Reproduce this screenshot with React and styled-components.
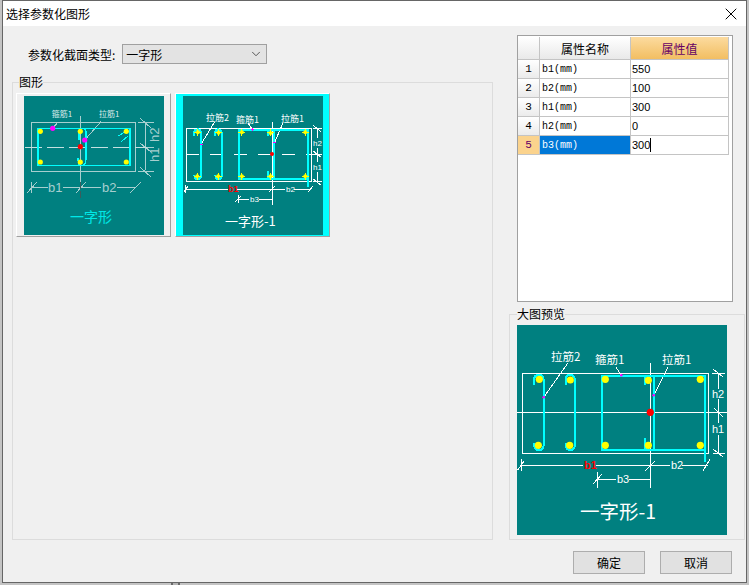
import React from "react";
import styled, { createGlobalStyle } from "styled-components";
import { ChevronDown, X } from "lucide-react";

const CJK = `"Noto Sans CJK SC", "Liberation Sans", sans-serif`;
const MONO = `"Liberation Mono", "Noto Sans CJK SC", monospace`;
const SANS = `"Liberation Sans", sans-serif`;

const GlobalStyle = createGlobalStyle`
  html, body {
    margin: 0;
    padding: 0;
    background: #c4c4c4;
  }
  * {
    box-sizing: border-box;
  }
`;

const Page = styled.div`
  width: 749px;
  height: 585px;
  padding-left: 2px;
  overflow: hidden;
  background-image: linear-gradient(
    90deg,
    transparent 171px,
    #6a6a6a 171px,
    #6a6a6a 173px,
    #b4b4b4 173px,
    #b4b4b4 178px,
    #6a6a6a 178px,
    #6a6a6a 180px,
    transparent 180px
  );
`;

const Dialog = styled.div`
  width: 745px;
  height: 583px;
  border: 1px solid #666;
  background: #f0f0f0;
  display: flex;
  flex-direction: column;
  font-family: ${CJK};
  font-size: 12px;
  color: #000;
`;

const TitleBar = styled.div`
  height: 25px;
  flex: none;
  background: #fff;
  display: flex;
  align-items: center;
  justify-content: space-between;
  padding: 0 5px 0 3px;
  line-height: 25px;
`;

const Content = styled.div`
  flex: none;
  height: 514px;
  display: flex;
  gap: 16px;
  padding-left: 9px;
`;

const LeftColumn = styled.div`
  width: 481px;
  display: flex;
  flex-direction: column;
  padding-top: 18px;
`;

const RightColumn = styled.div`
  width: 236px;
  display: flex;
  flex-direction: column;
  padding-top: 9px;
`;

const TypeRow = styled.div`
  height: 20px;
  display: flex;
  align-items: center;
  gap: 7px;
  padding-left: 16px;
  margin-bottom: 10px;
`;

const SelectBox = styled.div`
  width: 145px;
  height: 20px;
  border: 1px solid #a0a0a0;
  background: #e3e3e3;
  display: flex;
  align-items: center;
  justify-content: space-between;
  padding: 0 3px;
`;

const Group = styled.fieldset`
  margin: 0;
  min-width: 0;
  flex: 1;
  border: 1px solid #dcdcdc;
  padding: ${(p) => p.$padding};
  display: flex;
  align-items: flex-start;
`;

const GroupTitle = styled.legend`
  padding: 0;
  margin-left: ${(p) => p.$offset}px;
  height: 16px;
  line-height: 16px;
  font-size: 12px;
  background: #f0f0f0;
`;

const Thumb = styled.div`
  width: 155px;
  height: 144px;
  flex: none;
  display: flex;
  align-items: center;
  justify-content: center;
  margin-right: 4px;
  border: 1px solid;
  border-color: #fff #a0a0a0 #a0a0a0 #fff;
  background: ${(p) => (p.$selected ? "#00ffff" : "#f0f0f0")};
`;

const Drawing = styled.svg`
  display: block;
  flex: none;
  background: #008080;
`;

const Wire = styled.path`
  fill: none;
  stroke: ${(p) => p.$color || "#fff"};
  stroke-width: ${(p) => p.$weight || 1}px;
  stroke-dasharray: ${(p) => p.$dash || "none"};
  shape-rendering: crispEdges;
`;

const Caption = styled.text`
  font-family: ${(p) => (p.$latin ? SANS : CJK)};
  font-size: ${(p) => p.$size}px;
  font-weight: ${(p) => (p.$bold ? 700 : 400)};
  fill: ${(p) => p.$color || "#fff"};
`;

const Grid = styled.div`
  width: 216px;
  height: 267px;
  flex: none;
  margin-left: 8px;
  margin-bottom: 4px;
  border: 1px solid #a0a0a0;
  background: #fff;
  padding: 1px 3px 0 0;
`;

const GridRow = styled.div`
  display: grid;
  grid-template-columns: 22px 91px 98px;
  height: ${(p) => (p.$head ? 23 : 19)}px;
`;

const Cell = styled.div`
  border-right: 1px solid #c4c4c4;
  border-bottom: 1px solid #c4c4c4;
  display: flex;
  align-items: center;
  white-space: nowrap;
  overflow: hidden;
`;

const HeadCell = styled(Cell)`
  justify-content: center;
  font-size: 12px;
  background: ${(p) =>
    p.$active
      ? "linear-gradient(#fcdb9f, #f2be62)"
      : "linear-gradient(#ffffff, #e9e9e9)"};
  color: ${(p) => (p.$active ? "#660066" : "#000")};
`;

const RowNumber = styled(Cell)`
  justify-content: center;
  font-family: ${MONO};
  font-size: 11px;
  background: ${(p) =>
    p.$active ? "#fbd38d" : "linear-gradient(#ffffff, #ebebeb)"};
  color: ${(p) => (p.$active ? "#660066" : "#000")};
`;

const NameCell = styled(Cell)`
  padding-left: 2px;
  font-family: ${MONO};
  font-size: 10px;
  background: ${(p) => (p.$active ? "#0078d7" : "#fff")};
  color: ${(p) => (p.$active ? "#fff" : "#000")};
`;

const ValueCell = styled(Cell)`
  padding-left: 1px;
  font-family: ${SANS};
  font-size: 11px;
`;

const Editing = styled.span`
  border-right: 1px solid #000;
  line-height: 14px;
`;

const Footer = styled.div`
  flex: 1;
  display: flex;
  justify-content: flex-end;
  align-items: flex-start;
  gap: 15px;
  padding: 11px 14px 0 0;
`;

const Button = styled.button`
  width: 72px;
  height: 23px;
  padding: 0;
  border: 1px solid #adadad;
  background: #e1e1e1;
  font-family: ${CJK};
  font-size: 12px;
  color: #000;
`;

const ROWS = [
  ["b1(mm)", "550"],
  ["b2(mm)", "100"],
  ["h1(mm)", "300"],
  ["h2(mm)", "0"],
  ["b3(mm)", "300"],
];

// rebar outline, drawn at preview size and scaled down for the thumbnail
const STIRRUP = "M84.7 125V50.7H188V136.7M84.7 50.7V125H188";
const TIES = [
  "M17 60V55Q17 50 22 50Q26.7 50 26.7 56V119Q26.7 125 22 125Q17 125 17 118",
  "M48.5 60V55Q48.5 50 53 50Q58 50 58 56V119Q58 125 53 125Q48.5 125 48.5 118",
  "M127.5 60V54Q127.5 50.7 131 50.7H136.7V125H131Q127.5 125 127.5 120V113",
];
const BAR_TOP = [
  [22.3, 54.3],
  [53.3, 55],
  [88.3, 54.3],
  [131.3, 55.3],
  [183.3, 54.3],
];
const BAR_BOTTOM = [
  [21.3, 120.3],
  [52.7, 120.3],
  [88.3, 120.3],
  [131.3, 120.3],
  [183.3, 120.3],
];
const BARS = [...BAR_TOP, ...BAR_BOTTOM];

const PREVIEW_LINES = `
  M5.3 48.3H191.3V128.3H5.3Z M0 87.3H210 M133.3 38V162.7
  M26.7 72.3L50.7 38.3 M104.3 50.3L98.7 41.7 M136.7 70.3L151.3 41.7
  M4 140H66 M79 140H153 M165 140H191.3
  M0.7 145L7 136 M4 134V146 M128 146L138 136 M186 146L193 134
  M80.3 154.3H99 M112 154.3H133.3 M76 159L85 149 M80.3 147V163
  M201.3 48.3V64 M201.3 74V98 M201.3 110V128.3
  M195 48.3H208 M196 128.3H208 M196 44L206 52 M197 83L206 92 M196 124L206 132
`;

const SELECTED_LINES = `
  M3.3 32.3H128.3V85.7H3.3Z M89 25.7V109
  M18 48.3L31.7 25.7 M69.3 33.3L65 27 M91.7 46.3L100 27
  M2 93H45 M54 93H102 M111 93H128.3
  M1 96L5 90 M2 89V97 M86 96L92 90 M125 96L130 90
  M55 103H66 M76 103H90 M52 106L58 100 M55 99V107
  M134 32V42 M134 52V66 M134 76V86
  M130 32.3H139 M130 58H139 M130 85.7H139 M130 29L138 36 M130 55L138 61 M130 83L138 89
`;

const PLAIN_LINES = `
  M7.7 26.7H111.7V75H7.7Z
  M34.3 25.7L28.7 32.3 M77 25.7L60.7 44
  M7.7 91.7H24 M39 91.7H77 M93 91.7H111.7
  M3 97L13 86 M7.7 86V97 M52 97L62 86 M106 97L117 86
  M121 25.7V74 M114 26.7H130 M114 51H130 M114 75H130
  M116 22L127 32 M116 47L127 56 M116 71L127 81
`;

const PlainThumbnail = () => (
  <Drawing width="140" height="139" viewBox="0 0 140 139">
    <Wire d={PLAIN_LINES} $color="#a7cfcf" />
    <Wire d="M1 51.3H123" $color="#c4e0e0" $dash="17 5" />
    <Wire d="M56.7 20V86" $color="#a7cfcf" />
    <Wire d="M56.7 86V102" $color="#3c5c5c" $dash="7 2" />
    <Wire d="M14 32.3H106V69.7H14Z" $color="#00ffff" $weight={1.5} />
    <Wire
      d="M55 44V36Q55 32.3 59 32.3Q62 32.3 62 36V63Q62 69.7 57 69.7Q54 69.7 54 62"
      $color="#00ffff"
      $weight={1.3}
    />
    <Wire d="M94 40L103 35 M97 46L104 40" $color="#00ffff" />
    {[16.3, 56.3, 102.3].map((x) => (
      <React.Fragment key={x}>
        <circle cx={x} cy="35.3" r="2.6" fill="#ffff00" />
        <circle cx={x} cy="66" r="2.6" fill="#ffff00" />
      </React.Fragment>
    ))}
    <circle cx="28.7" cy="32.3" r="2.6" fill="#ff00ff" />
    <circle cx="60.7" cy="44" r="2.6" fill="#ff00ff" />
    <circle cx="56.3" cy="50.7" r="2.6" fill="#ff0000" />
    <Caption x="27.7" y="20.5" $size={8} $color="#d8eaea">
      箍筋1
    </Caption>
    <Caption x="75" y="20.5" $size={8} $color="#d8eaea">
      拉筋1
    </Caption>
    <Caption x="24" y="96" $size={13} $latin $color="#a7cfcf">
      b1
    </Caption>
    <Caption x="78" y="96" $size={13} $latin $color="#a7cfcf">
      b2
    </Caption>
    <Caption
      $size={13}
      $latin
      $color="#a7cfcf"
      transform="translate(135 46) rotate(-90)"
    >
      h2
    </Caption>
    <Caption
      $size={13}
      $latin
      $color="#a7cfcf"
      transform="translate(135 66) rotate(-90)"
    >
      h1
    </Caption>
    <Caption x="46" y="126" $size={14} $color="#00e8e8">
      一字形
    </Caption>
  </Drawing>
);

const SelectedThumbnail = () => (
  <Drawing width="140" height="139" viewBox="0 0 140 139">
    <Wire d={SELECTED_LINES} />
    <Wire d="M3 58H140" $dash="13 11" />
    <g transform="scale(0.667)">
      <Wire d={STIRRUP} $color="#00ffff" $weight={3} />
      {TIES.map((d) => (
        <Wire key={d} d={d} $color="#00ffff" $weight={3} />
      ))}
    </g>
    {BARS.map(([x, y]) => (
      <React.Fragment key={`${x}-${y}`}>
        <circle cx={x * 0.667} cy={y * 0.667} r="2" fill="#ffff00" />
        <Wire
          d={`M${x * 0.667 - 3.5} ${y * 0.667}h7M${x * 0.667} ${y * 0.667 - 3.5}v7`}
          $color="#ffff00"
        />
      </React.Fragment>
    ))}
    <circle cx="89" cy="58" r="2" fill="#ff0000" />
    <Wire
      d="M16.5 48.3h3M69.3 32v3M68 33.3h3M90.2 46.3h3"
      $color="#ff00ff"
      $weight={1.5}
    />
    <Caption x="23" y="25" $size={9}>
      拉筋2
    </Caption>
    <Caption x="53" y="27" $size={9}>
      箍筋1
    </Caption>
    <Caption x="98" y="26" $size={9}>
      拉筋1
    </Caption>
    <Caption x="45" y="96" $size={9} $latin $bold $color="#ff0000">
      b1
    </Caption>
    <Caption x="103" y="96" $size={8} $latin>
      b2
    </Caption>
    <Caption x="67" y="106" $size={8} $latin>
      b3
    </Caption>
    <Caption x="130" y="50" $size={8} $latin>
      h2
    </Caption>
    <Caption x="130" y="74" $size={8} $latin>
      h1
    </Caption>
    <Caption x="42" y="130" $size={13}>
      一字形-1
    </Caption>
  </Drawing>
);

const LargePreview = () => (
  <Drawing width="210" height="210" viewBox="0 0 210 210">
    <Wire d={PREVIEW_LINES} />
    <Wire d={STIRRUP} $color="#00ffff" $weight={2} />
    {TIES.map((d) => (
      <Wire key={d} d={d} $color="#00ffff" $weight={2} />
    ))}
    {BARS.map(([x, y]) => (
      <circle key={`${x}-${y}`} cx={x} cy={y} r="3.6" fill="#ffff00" />
    ))}
    <circle cx="133.3" cy="87.3" r="3.6" fill="#ff0000" />
    <circle cx="26.7" cy="72.3" r="1.3" fill="#ff00ff" />
    <circle cx="104.3" cy="50.3" r="1.3" fill="#ff00ff" />
    <circle cx="136.7" cy="70.3" r="1.3" fill="#ff00ff" />
    <Caption x="34" y="36" $size={11.5}>
      拉筋2
    </Caption>
    <Caption x="78" y="39" $size={11.5}>
      箍筋1
    </Caption>
    <Caption x="145" y="39" $size={11.5}>
      拉筋1
    </Caption>
    <Caption x="67" y="144" $size={11} $latin $bold $color="#ff0000">
      b1
    </Caption>
    <Caption x="154" y="144" $size={11} $latin>
      b2
    </Caption>
    <Caption x="100" y="158" $size={11} $latin>
      b3
    </Caption>
    <Caption x="195" y="73" $size={11} $latin>
      h2
    </Caption>
    <Caption x="195" y="108" $size={11} $latin>
      h1
    </Caption>
    <Caption x="63" y="194" $size={19.5}>
      一字形-1
    </Caption>
  </Drawing>
);

const App = () => (
  <Page>
    <GlobalStyle />
    <Dialog>
      <TitleBar>
        <span>选择参数化图形</span>
        <X size={20} strokeWidth={1.2} color="#000" />
      </TitleBar>
      <Content>
        <LeftColumn>
          <TypeRow>
            <span>参数化截面类型:</span>
            <SelectBox>
              一字形
              <ChevronDown size={14} strokeWidth={1.5} color="#444" />
            </SelectBox>
          </TypeRow>
          <Group $padding="3px 3px 0">
            <GroupTitle $offset={3}>图形</GroupTitle>
            <Thumb>
              <PlainThumbnail />
            </Thumb>
            <Thumb $selected>
              <SelectedThumbnail />
            </Thumb>
          </Group>
        </LeftColumn>
        <RightColumn>
          <Grid>
            <GridRow $head>
              <HeadCell />
              <HeadCell>属性名称</HeadCell>
              <HeadCell $active>属性值</HeadCell>
            </GridRow>
            {ROWS.map(([name, value], i) => {
              const active = i === ROWS.length - 1;
              return (
                <GridRow key={name}>
                  <RowNumber $active={active}>{i + 1}</RowNumber>
                  <NameCell $active={active}>{name}</NameCell>
                  <ValueCell>
                    {active ? <Editing>{value}</Editing> : value}
                  </ValueCell>
                </GridRow>
              );
            })}
          </Grid>
          <Group $padding="3px 0 0 7px">
            <GroupTitle $offset={0}>大图预览</GroupTitle>
            <LargePreview />
          </Group>
        </RightColumn>
      </Content>
      <Footer>
        <Button>确定</Button>
        <Button>取消</Button>
      </Footer>
    </Dialog>
  </Page>
);

export default App;
